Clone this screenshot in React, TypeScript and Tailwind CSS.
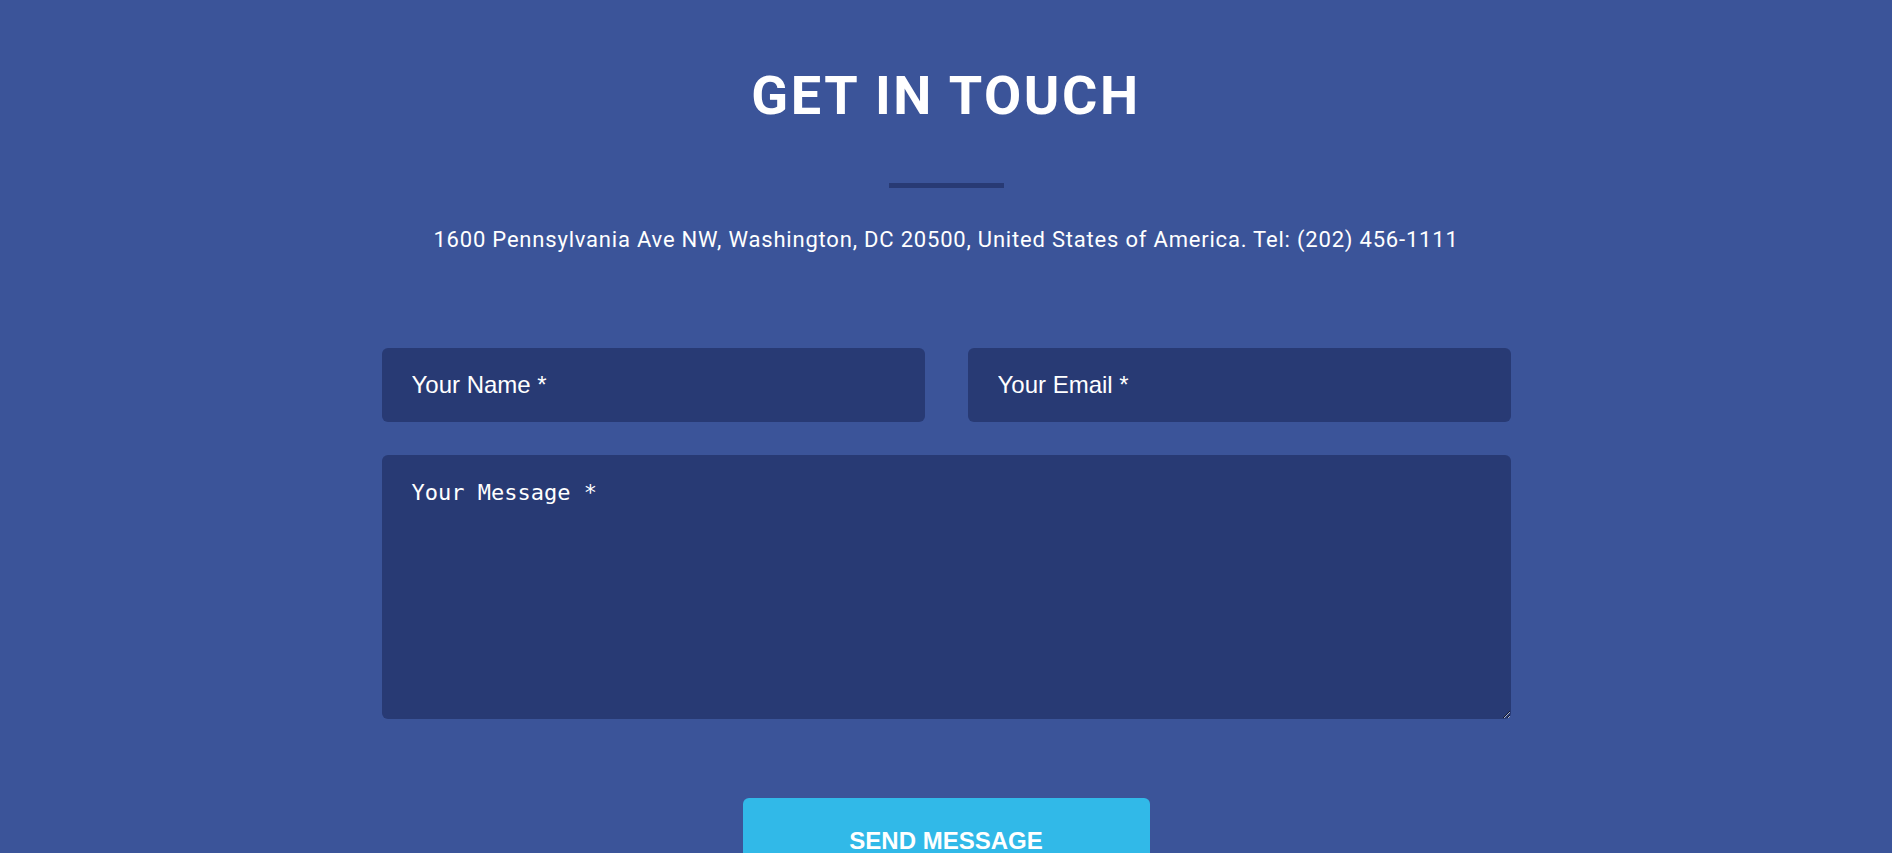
import { useState } from "react";

const ContactSection = () => {
  const [name, setName] = useState("");
  const [email, setEmail] = useState("");
  const [message, setMessage] = useState("");

  return (
    <section className="min-h-[853px] w-full bg-[#3b5499] pt-[69px] pb-10 font-['Roboto',sans-serif] text-white">
      <h2 className="text-center text-[54px] leading-none font-bold tracking-[2.6px]">GET IN TOUCH</h2>

      <div className="mx-auto mt-[60px] h-[5px] w-[115px] bg-[#283a74]" />

      <p className="mt-[41px] text-center text-[22px] leading-none tracking-[0.8px]">
        1600 Pennsylvania Ave NW, Washington, DC 20500, United States of America. Tel: (202) 456-1111
      </p>

      <form className="mx-auto mt-[97px] w-[1129px]" onSubmit={(e) => e.preventDefault()}>
        <div className="grid grid-cols-2 gap-x-[43px]">
          <input
            type="text"
            value={name}
            onChange={(e) => setName(e.target.value)}
            placeholder="Your Name *"
            className="h-[74px] rounded-[6px] bg-[#283a74] px-[30px] font-['Liberation_Sans',Arial,sans-serif] text-[24px] text-white outline-none placeholder:text-white"
          />
          <input
            type="email"
            value={email}
            onChange={(e) => setEmail(e.target.value)}
            placeholder="Your Email *"
            className="h-[74px] rounded-[6px] bg-[#283a74] px-[30px] font-['Liberation_Sans',Arial,sans-serif] text-[24px] text-white outline-none placeholder:text-white"
          />
        </div>

        <textarea
          value={message}
          onChange={(e) => setMessage(e.target.value)}
          placeholder="Your Message *"
          className="mt-[33px] block h-[264px] w-full rounded-[6px] bg-[#283a74] px-[30px] pt-[21px] pb-[25px] font-['DejaVu_Sans_Mono',monospace] text-[22px] text-white outline-none placeholder:text-white"
        />

        <div className="mt-[79px] flex justify-center">
          <button
            type="submit"
            className="h-[84px] w-[407px] rounded-[6px] bg-[#31b9e8] pt-[2px] font-['Liberation_Sans',Arial,sans-serif] text-[24px] font-bold text-white uppercase"
          >
            Send Message
          </button>
        </div>
      </form>
    </section>
  );
};

export default function App() {
  return <ContactSection />;
}
